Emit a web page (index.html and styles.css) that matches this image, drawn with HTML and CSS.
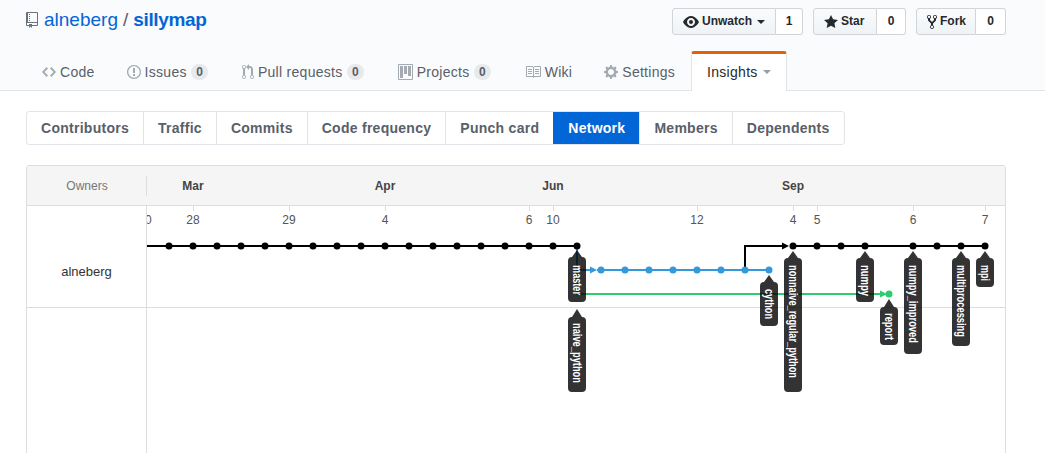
FILE: index.html
```html
<!DOCTYPE html>
<html lang="en">
<head>
    <meta charset="UTF-8">
    <title>Network Graph · alneberg/sillymap</title>
    <link rel="stylesheet" href="styles.css">
</head>
<body>
    <header class="repohead">
        <div class="repohead-top">
            <h1 class="repo-title">
                <svg class="icon repo-icon" viewBox="0 0 12 16" width="12" height="16"><path d="M4 9H3V8h1v1zm0-3H3v1h1V6zm0-2H3v1h1V4zm0-2H3v1h1V2zm8-1v12c0 .55-.45 1-1 1H6v2l-1.5-1.5L3 16v-2H1c-.55 0-1-.45-1-1V1c0-.55.45-1 1-1h10c.55 0 1 .45 1 1zm-1 10H1v2h2v-1h3v1h5v-2zm0-10H2v9h9V1z"/></svg>
                <a href="#">alneberg</a>
                <span class="slash">/</span>
                <a href="#" class="repo-name">sillymap</a>
            </h1>
            <div class="actions">
                <div class="btn-group">
                    <span class="btn btn-unwatch"><svg class="icon" viewBox="0 0 16 16" width="16" height="16"><path d="M8.06 2C3 2 0 8 0 8s3 6 8.06 6C13 14 16 8 16 8s-3-6-7.94-6zM8 12c-2.2 0-4-1.78-4-4 0-2.2 1.8-4 4-4 2.22 0 4 1.8 4 4 0 2.22-1.78 4-4 4zm2-4c0 1.11-.89 2-2 2-1.11 0-2-.89-2-2 0-1.11.89-2 2-2 1.11 0 2 .89 2 2z"/></svg>Unwatch<i class="caret"></i></span>
                    <span class="btn-count count-watch">1</span>
                </div>
                <div class="btn-group">
                    <span class="btn btn-star"><svg class="icon" viewBox="0 0 14 16" width="14" height="16"><path d="M14 6l-4.9-.64L7 1 4.9 5.36 0 6l3.6 3.26L2.67 14 7 11.67 11.33 14l-.93-4.74L14 6z"/></svg>Star</span>
                    <span class="btn-count count-star">0</span>
                </div>
                <div class="btn-group">
                    <span class="btn btn-fork"><svg class="icon" viewBox="0 0 10 16" width="10" height="16"><path d="M8 1a1.993 1.993 0 0 0-1 3.72V6L5 8 3 6V4.72A1.993 1.993 0 0 0 2 1a1.993 1.993 0 0 0-1 3.72V6.5l3 3v1.78A1.993 1.993 0 0 0 5 15a1.993 1.993 0 0 0 1-3.72V9.5l3-3V4.72A1.993 1.993 0 0 0 8 1zM2 4.2C1.34 4.2.8 3.65.8 3c0-.65.55-1.2 1.2-1.2.65 0 1.2.55 1.2 1.2 0 .65-.55 1.2-1.2 1.2zm3 10c-.66 0-1.2-.55-1.2-1.2 0-.65.55-1.2 1.2-1.2.65 0 1.2.55 1.2 1.2 0 .65-.55 1.2-1.2 1.2zm3-10c-.66 0-1.2-.55-1.2-1.2 0-.65.55-1.2 1.2-1.2.65 0 1.2.55 1.2 1.2 0 .65-.55 1.2-1.2 1.2z"/></svg>Fork</span>
                    <span class="btn-count count-fork">0</span>
                </div>
            </div>
        </div>
        <nav class="reponav">
            <a href="#" class="reponav-item"><svg class="icon" viewBox="0 0 14 16" width="14" height="16"><path d="M9.5 3L8 4.5 11.5 8 8 11.5 9.5 13 14 8 9.5 3zm-5 0L0 8l4.5 5L6 11.5 2.5 8 6 4.5 4.5 3z"/></svg>Code</a>
            <a href="#" class="reponav-item"><svg class="icon" viewBox="0 0 14 16" width="14" height="16"><path d="M7 2.3c3.14 0 5.7 2.56 5.7 5.7s-2.56 5.7-5.7 5.7A5.71 5.71 0 0 1 1.3 8c0-3.14 2.56-5.7 5.7-5.7zM7 1C3.14 1 0 4.14 0 8s3.14 7 7 7 7-3.14 7-7-3.14-7-7-7zm1 3H6v5h2V4zm0 6H6v2h2v-2z"/></svg>Issues<span class="counter">0</span></a>
            <a href="#" class="reponav-item"><svg class="icon" viewBox="0 0 12 16" width="12" height="16"><path d="M11 11.28V5c-.03-.78-.34-1.47-.94-2.06C9.46 2.35 8.78 2.03 8 2H7V0L4 3l3 3V4h1c.27.02.48.11.69.31.21.2.3.42.31.69v6.28A1.993 1.993 0 0 0 10 15a1.993 1.993 0 0 0 1-3.72zm-1 2.92c-.66 0-1.2-.55-1.2-1.2 0-.65.55-1.2 1.2-1.2.65 0 1.2.55 1.2 1.2 0 .65-.55 1.2-1.2 1.2zM4 3c0-1.11-.89-2-2-2a1.993 1.993 0 0 0-1 3.72v6.56A1.993 1.993 0 0 0 2 15a1.993 1.993 0 0 0 1-3.72V4.72c.59-.34 1-.98 1-1.72zm-.8 10c0 .66-.55 1.2-1.2 1.2-.65 0-1.2-.55-1.2-1.2 0-.65.55-1.2 1.2-1.2.65 0 1.2.55 1.2 1.2zM2 4.2C1.34 4.2.8 3.65.8 3c0-.65.55-1.2 1.2-1.2.65 0 1.2.55 1.2 1.2 0 .65-.55 1.2-1.2 1.2z"/></svg>Pull requests<span class="counter">0</span></a>
            <a href="#" class="reponav-item"><svg class="icon" viewBox="0 0 15 16" width="15" height="16"><path d="M10 12h3V2h-3v10zm-4-2h3V2H6v8zm-4 4h3V2H2v12zm-1 1h13V1H1v14zM14 0H1a1 1 0 0 0-1 1v14a1 1 0 0 0 1 1h13a1 1 0 0 0 1-1V1a1 1 0 0 0-1-1z"/></svg>Projects<span class="counter">0</span></a>
            <a href="#" class="reponav-item"><svg class="icon" viewBox="0 0 16 16" width="16" height="16"><path d="M3 5h4v1H3V5zm0 3h4V7H3v1zm0 2h4V9H3v1zm11-5h-4v1h4V5zm0 2h-4v1h4V7zm0 2h-4v1h4V9zm2-6v9c0 .55-.45 1-1 1H9.5l-1 1-1-1H2c-.55 0-1-.45-1-1V3c0-.55.45-1 1-1h5.5l1 1 1-1H15c.55 0 1 .45 1 1zm-8 .5L7.5 3H2v9h6V3.5zm7-.5H9.5l-.5.5V12h6V3z"/></svg>Wiki</a>
            <a href="#" class="reponav-item"><svg class="icon" viewBox="0 0 14 16" width="14" height="16"><path d="M14 8.77v-1.6l-1.94-.64-.45-1.09.88-1.84-1.13-1.13-1.81.91-1.09-.45-.69-1.92h-1.6l-.63 1.94-1.11.45-1.84-.88-1.13 1.13.91 1.81-.45 1.09L0 7.23v1.59l1.94.64.45 1.09-.88 1.84 1.13 1.13 1.81-.91 1.09.45.69 1.92h1.59l.63-1.94 1.11-.45 1.84.88 1.13-1.13-.92-1.81.47-1.09L14 8.75v.02zM7 11c-1.66 0-3-1.34-3-3s1.34-3 3-3 3 1.34 3 3-1.34 3-3 3z"/></svg>Settings</a>
            <a href="#" class="reponav-item selected">Insights<i class="caret"></i></a>
        </nav>
    </header>

    <main class="content">
        <nav class="subnav">
            <a href="#" class="subnav-item">Contributors</a>
            <a href="#" class="subnav-item">Traffic</a>
            <a href="#" class="subnav-item">Commits</a>
            <a href="#" class="subnav-item">Code frequency</a>
            <a href="#" class="subnav-item">Punch card</a>
            <a href="#" class="subnav-item selected">Network</a>
            <a href="#" class="subnav-item">Members</a>
            <a href="#" class="subnav-item">Dependents</a>
        </nav>

        <section class="network">
            <div class="owners-head"><span>Owners</span></div>
            <svg class="months" viewBox="147 166 858 39" width="858" height="39">
                <text x="193" y="190">Mar</text>
                <text x="385" y="190">Apr</text>
                <text x="553" y="190">Jun</text>
                <text x="793" y="190">Sep</text>
            </svg>
            <div class="owners">
                <div class="owner-row">alneberg</div>
            </div>
            <svg class="graph" viewBox="147 206 858 300" width="858" height="300">
                <line class="row-line" x1="147" y1="307.5" x2="1005" y2="307.5"/>

                <g class="ticks">
                    <path d="M193.5 206v5M289.5 206v5M385.5 206v5M529.5 206v5M553.5 206v5M697.5 206v5M793.5 206v5M817.5 206v5M913.5 206v5M985.5 206v5"/>
                </g>
                <g class="days">
                    <text x="145" y="224">20</text>
                    <text x="193" y="224">28</text>
                    <text x="289" y="224">29</text>
                    <text x="385" y="224">4</text>
                    <text x="529" y="224">6</text>
                    <text x="553" y="224">10</text>
                    <text x="697" y="224">12</text>
                    <text x="793" y="224">4</text>
                    <text x="817" y="224">5</text>
                    <text x="913" y="224">6</text>
                    <text x="985" y="224">7</text>
                </g>

                <!-- branch lines -->
                <path class="line blue" d="M577 246V270H592"/>
                <polygon class="fill-blue" points="590,266.5 597,270 590,273.5"/>
                <path class="line blue" d="M597 270H769"/>
                <path class="line green" d="M577 270V294H881"/>
                <polygon class="fill-green" points="880,290.5 887,294 880,297.5"/>
                <path class="line black" d="M147 246H577"/>
                <path class="line black" d="M745 270V246H783"/>
                <polygon class="fill-black" points="782,242.5 789,246 782,249.5"/>
                <path class="line black" d="M793 246H985"/>

                <g class="fill-black">
                    <circle cx="169" cy="246" r="3.5"/><circle cx="193" cy="246" r="3.5"/><circle cx="217" cy="246" r="3.5"/>
                    <circle cx="241" cy="246" r="3.5"/><circle cx="265" cy="246" r="3.5"/><circle cx="289" cy="246" r="3.5"/>
                    <circle cx="313" cy="246" r="3.5"/><circle cx="337" cy="246" r="3.5"/><circle cx="361" cy="246" r="3.5"/>
                    <circle cx="385" cy="246" r="3.5"/><circle cx="409" cy="246" r="3.5"/><circle cx="433" cy="246" r="3.5"/>
                    <circle cx="457" cy="246" r="3.5"/><circle cx="481" cy="246" r="3.5"/><circle cx="505" cy="246" r="3.5"/>
                    <circle cx="529" cy="246" r="3.5"/><circle cx="553" cy="246" r="3.5"/><circle cx="577" cy="246" r="3.5"/>
                    <circle cx="793" cy="246" r="3.5"/><circle cx="817" cy="246" r="3.5"/><circle cx="841" cy="246" r="3.5"/>
                    <circle cx="865" cy="246" r="3.5"/><circle cx="913" cy="246" r="3.5"/><circle cx="937" cy="246" r="3.5"/>
                    <circle cx="961" cy="246" r="3.5"/><circle cx="985" cy="246" r="3.5"/>
                </g>
                <g class="fill-blue">
                    <circle cx="601" cy="270" r="3.5"/><circle cx="625" cy="270" r="3.5"/><circle cx="649" cy="270" r="3.5"/>
                    <circle cx="673" cy="270" r="3.5"/><circle cx="697" cy="270" r="3.5"/><circle cx="721" cy="270" r="3.5"/>
                    <circle cx="745" cy="270" r="3.5"/><circle cx="769" cy="270" r="3.5"/>
                </g>
                <circle class="fill-green" cx="889" cy="294" r="3.5"/>

                <!-- ref labels -->
                <g class="tags">
                    <path d="M577 250l5 7h0a4 4 0 0 1 4 4v37a4 4 0 0 1-4 4h-10a4 4 0 0 1-4-4v-37a4 4 0 0 1 4-4h0z"/>
                    <path d="M577 309l5 8h0a4 4 0 0 1 4 4v67a4 4 0 0 1-4 4h-10a4 4 0 0 1-4-4v-67a4 4 0 0 1 4-4h0z"/>
                    <path d="M769 275l5 7h0a4 4 0 0 1 4 4v36a4 4 0 0 1-4 4h-10a4 4 0 0 1-4-4v-36a4 4 0 0 1 4-4h0z"/>
                    <path d="M793 251l5 7h0a4 4 0 0 1 4 4v126a4 4 0 0 1-4 4h-10a4 4 0 0 1-4-4v-126a4 4 0 0 1 4-4h0z"/>
                    <path d="M865 251l5 7h0a4 4 0 0 1 4 4v36a4 4 0 0 1-4 4h-10a4 4 0 0 1-4-4v-36a4 4 0 0 1 4-4h0z"/>
                    <path d="M889 299l5 8h0a4 4 0 0 1 4 4v30a4 4 0 0 1-4 4h-10a4 4 0 0 1-4-4v-30a4 4 0 0 1 4-4h0z"/>
                    <path d="M913 251l5 7h0a4 4 0 0 1 4 4v88a4 4 0 0 1-4 4h-10a4 4 0 0 1-4-4v-88a4 4 0 0 1 4-4h0z"/>
                    <path d="M961 251l5 7h0a4 4 0 0 1 4 4v80a4 4 0 0 1-4 4h-10a4 4 0 0 1-4-4v-80a4 4 0 0 1 4-4h0z"/>
                    <path d="M985 251l5 7h0a4 4 0 0 1 4 4v21a4 4 0 0 1-4 4h-10a4 4 0 0 1-4-4v-21a4 4 0 0 1 4-4h0z"/>
                </g>
                <g class="tag-text">
                    <text transform="translate(573 265) rotate(90)" textLength="30" lengthAdjust="spacingAndGlyphs">master</text>
                    <text transform="translate(573 323) rotate(90)" textLength="60" lengthAdjust="spacingAndGlyphs">naive_python</text>
                    <text transform="translate(765 289) rotate(90)" textLength="30" lengthAdjust="spacingAndGlyphs">cython</text>
                    <text transform="translate(789 265) rotate(90)" textLength="113" lengthAdjust="spacingAndGlyphs">nonnaive_regular_python</text>
                    <text transform="translate(861 265) rotate(90)" textLength="31" lengthAdjust="spacingAndGlyphs">numpy</text>
                    <text transform="translate(885 313) rotate(90)" textLength="27" lengthAdjust="spacingAndGlyphs">report</text>
                    <text transform="translate(909 265) rotate(90)" textLength="78" lengthAdjust="spacingAndGlyphs">numpy_improved</text>
                    <text transform="translate(957 265) rotate(90)" textLength="72" lengthAdjust="spacingAndGlyphs">multiprocessing</text>
                    <text transform="translate(981 265) rotate(90)" textLength="16" lengthAdjust="spacingAndGlyphs">mpi</text>
                </g>
            </svg>
        </section>
    </main>
</body>
</html>
```

FILE: styles.css
```css
html, body {
    height: 453px;
    overflow: hidden;
}
body {
    margin: 0;
    background: #fff;
    color: #24292e;
    font-family: "Liberation Sans", Arial, sans-serif;
    font-size: 14px;
}
a {
    color: inherit;
    text-decoration: none;
}
.icon {
    fill: currentColor;
    fill-rule: evenodd;
    flex: none;
}

/* repo header */
.repohead {
    background: #fafbfc;
    border-bottom: 1px solid #e1e4e8;
    height: 90px;
    padding: 0 39px 0 26px;
}
.repohead-top {
    display: flex;
    justify-content: space-between;
    height: 51px;
    padding-top: 8px;
    box-sizing: border-box;
}
.repo-title {
    display: flex;
    align-items: center;
    gap: 5px;
    height: 24px;
    margin: 0;
    font-size: 19px;
    font-weight: 400;
    color: #0366d6;
}
.repo-icon {
    color: #6a737d;
    margin-right: 1px;
}
.slash {
    color: #586069;
}
.repo-name {
    font-weight: 700;
    letter-spacing: -0.35px;
}
.actions {
    display: flex;
    gap: 10px;
}
.btn-group {
    display: flex;
    height: 27px;
    font-size: 12px;
    font-weight: 700;
    line-height: 25px;
}
.btn {
    display: flex;
    align-items: center;
    padding: 0 10px;
    box-sizing: border-box;
    background: linear-gradient(#fafbfc, #eff3f6);
    border: 1px solid #d1d5da;
    border-radius: 3px 0 0 3px;
}
.btn .icon {
    margin-right: 3px;
}
.btn-unwatch { width: 104px; }
.btn-star { width: 64px; }
.btn-fork { width: 60px; }
.btn-count {
    box-sizing: border-box;
    text-align: center;
    background: #fff;
    border: 1px solid #d1d5da;
    border-left: 0;
    border-radius: 0 3px 3px 0;
}
.count-watch { width: 27px; }
.count-star { width: 29px; }
.count-fork { width: 30px; }
.caret {
    display: inline-block;
    margin-left: 5px;
    border: 4px solid transparent;
    border-top-color: currentColor;
    border-bottom: 0;
}

/* repo tabs */
.reponav {
    display: flex;
}
.reponav-item {
    display: flex;
    align-items: center;
    height: 40px;
    padding: 2px 16px 0;
    box-sizing: border-box;
    color: #586069;
    letter-spacing: 0.28px;
    white-space: nowrap;
}
.reponav-item .icon {
    color: #a3aab1;
    margin-right: 4px;
}
.reponav-item.selected {
    background: #fff;
    color: #24292e;
    border: 1px solid #e1e4e8;
    border-top: 3px solid #e36209;
    border-bottom: 0;
    border-radius: 3px 3px 0 0;
    padding: 0 15px 1px;
}
.reponav-item.selected .caret {
    color: #959da5;
}
.counter {
    margin: 0 1.5px 0 4px;
    padding: 2px 5.5px;
    font-size: 12px;
    font-weight: 700;
    line-height: 1;
    letter-spacing: 0;
    color: #586069;
    background: rgba(27, 31, 35, 0.08);
    border-radius: 20px;
}

/* insights tabs */
.content {
    padding: 20px 39px 0 26px;
}
.subnav {
    display: inline-flex;
    height: 34px;
    box-sizing: border-box;
    border: 1px solid #e1e4e8;
    border-radius: 3px;
    margin-bottom: 20px;
    vertical-align: top;
}
.subnav-item {
    display: flex;
    align-items: center;
    padding: 0 14px;
    font-weight: 700;
    letter-spacing: 0.27px;
    color: #586069;
    border-left: 1px solid #e1e4e8;
}
.subnav-item:first-child {
    border-left: 0;
}
.subnav-item.selected {
    background: #0366d6;
    color: #fff;
    border-color: #0366d6;
}

/* network graph */
.network {
    display: grid;
    grid-template-columns: 120px 1fr;
    grid-template-rows: 40px 1fr;
    border: 1px solid #ddd;
    border-radius: 3px 3px 0 0;
    width: 978px;
    height: 320px;
}
.owners-head, .months {
    background: #f5f5f5;
    border-bottom: 1px solid #ddd;
}
.owners-head {
    display: flex;
    align-items: center;
    justify-content: center;
    font-size: 12px;
    color: #777;
    position: relative;
}
.owners-head::after {
    content: "";
    position: absolute;
    right: 0;
    top: 10px;
    height: 20px;
    border-right: 1px solid #ddd;
}
.months text {
    font-size: 12px;
    font-weight: 700;
    fill: #444;
    text-anchor: middle;
}
.owners {
    border-right: 1px solid #ddd;
}
.owner-row {
    height: 102px;
    padding-top: 30px;
    box-sizing: border-box;
    border-bottom: 1px solid #ddd;
    display: flex;
    align-items: center;
    justify-content: center;
    font-size: 13px;
    color: #333;
}
.graph {
    display: block;
}
.row-line {
    stroke: #ddd;
    stroke-width: 1;
}
.ticks path {
    stroke: #ddd;
    fill: none;
}
.days text {
    font-size: 12px;
    fill: #555;
    text-anchor: middle;
}
.line {
    fill: none;
    stroke-width: 2;
}
.black { stroke: #000; }
.blue { stroke: #3498db; }
.green { stroke: #2ecc71; }
.fill-black { fill: #000; }
.fill-blue { fill: #3498db; }
.fill-green { fill: #2ecc71; }
.tags path {
    fill: #000;
    fill-opacity: 0.8;
}
.tag-text text {
    font-size: 12px;
    font-weight: 700;
    fill: #fff;
}
```
